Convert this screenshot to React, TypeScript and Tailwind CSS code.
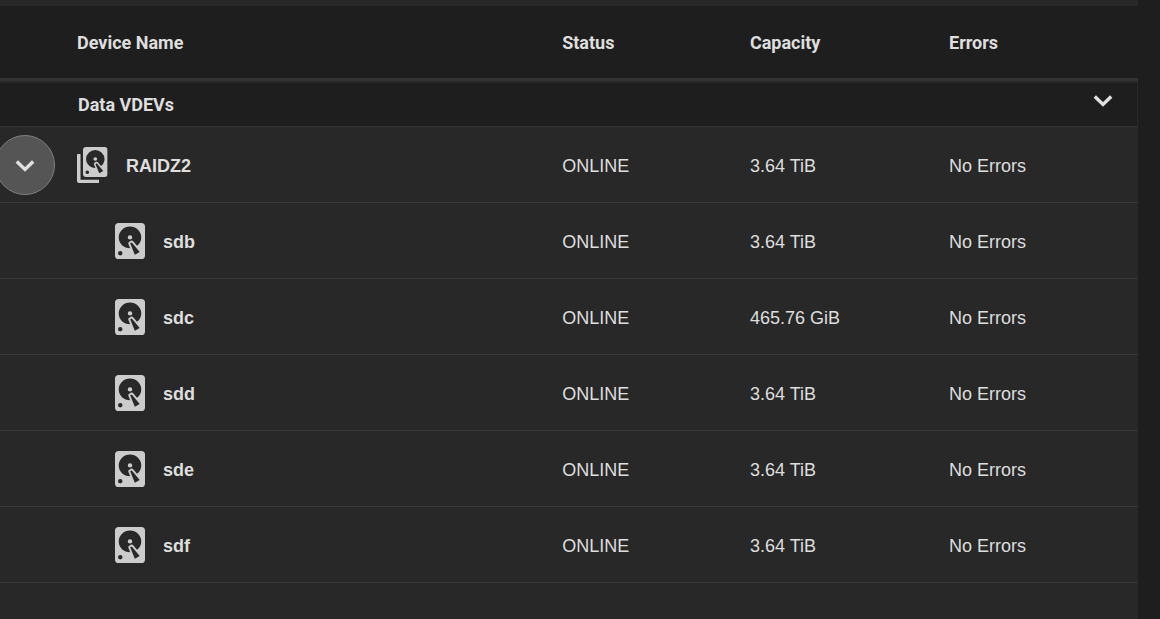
import React, { useState } from 'react';

interface Disk {
  name: string;
  status: string;
  capacity: string;
  errors: string;
}

const raid: Disk = { name: 'RAIDZ2', status: 'ONLINE', capacity: '3.64 TiB', errors: 'No Errors' };

const disks: Disk[] = [
  { name: 'sdb', status: 'ONLINE', capacity: '3.64 TiB', errors: 'No Errors' },
  { name: 'sdc', status: 'ONLINE', capacity: '465.76 GiB', errors: 'No Errors' },
  { name: 'sdd', status: 'ONLINE', capacity: '3.64 TiB', errors: 'No Errors' },
  { name: 'sde', status: 'ONLINE', capacity: '3.64 TiB', errors: 'No Errors' },
  { name: 'sdf', status: 'ONLINE', capacity: '3.64 TiB', errors: 'No Errors' },
];

const DISK_PATH =
  'M6,2H18A2,2 0 0,1 20,4V20A2,2 0 0,1 18,22H6A2,2 0 0,1 4,20V4A2,2 0 0,1 6,2M12,4A6,6 0 0,0 6,10C6,13.31 8.69,16 12.1,16L11.22,13.77C10.95,13.29 11.11,12.68 11.59,12.4L12.45,11.9C12.93,11.63 13.54,11.79 13.82,12.27L15.74,14.69C17.12,13.59 18,11.9 18,10A6,6 0 0,0 12,4M12,8.8A1.2,1.2 0 0,1 13.2,10A1.2,1.2 0 0,1 12,11.2A1.2,1.2 0 0,1 10.8,10A1.2,1.2 0 0,1 12,8.8M6.8,17.6A1.2,1.2 0 0,0 5.6,18.8A1.2,1.2 0 0,0 6.8,20A1.2,1.2 0 0,0 8,18.8A1.2,1.2 0 0,0 6.8,17.6M12.09,13.27L14.58,19.58L17.17,18.08L12.95,12.77L12.09,13.27Z';

const DiskIcon = () => (
  <svg viewBox="4 2 16 20" preserveAspectRatio="none" className="w-[30px] h-9 shrink-0 fill-[#cccccc]" aria-hidden="true">
    <path d={DISK_PATH} />
  </svg>
);

const DiskGroupIcon = () => (
  <svg viewBox="0 0 31 36" className="w-[31px] h-9 shrink-0 fill-[#cccccc]" aria-hidden="true">
    <path d="M1 7H3.5V32.7H22V36H2A2 2 0 0 1 0 34V8A1 1 0 0 1 1 7Z" />
    <svg x="6" y="0" width="24.6" height="30" viewBox="4 2 16 20" preserveAspectRatio="none">
      <path d={DISK_PATH} />
    </svg>
  </svg>
);

const Chevron = ({ open }: { open: boolean }) => (
  <svg
    viewBox="0 0 20 12"
    className={`w-5 h-3 fill-none stroke-[#e0e0e0] ${open ? '' : '-rotate-90'}`}
    strokeWidth="3.5"
    aria-hidden="true"
  >
    <path d="M1.8 1.6L10 9.4L18.2 1.6" />
  </svg>
);

const cell = 'border-b border-[#383838] p-0';

const DataCells = ({ disk }: { disk: Disk }) => (
  <>
    <td className={`${cell} pt-0.5`}>{disk.status}</td>
    <td className={`${cell} pt-0.5`}>{disk.capacity}</td>
    <td className={`${cell} pt-0.5`}>{disk.errors}</td>
  </>
);

export default function App() {
  const [groupOpen, setGroupOpen] = useState(true);
  const [raidOpen, setRaidOpen] = useState(true);

  return (
    <main className="min-h-screen bg-[#1e1e1e] pr-[22px] overflow-hidden font-['Liberation_Sans',sans-serif] text-lg text-[#dedede]">
      <div className="min-h-screen bg-[#282828] pt-1.5">
        <table className="w-full table-fixed border-separate border-spacing-0 text-left">
          <colgroup>
            <col className="w-[49.4%]" />
            <col className="w-[16.5%]" />
            <col className="w-[17.5%]" />
            <col />
          </colgroup>
          <thead className="font-[Roboto,sans-serif]">
            <tr className="h-[75px] bg-[#1e1e1e] [&>th]:border-b-3 [&>th]:border-[#343434] [&>th]:p-0 [&>th]:pt-0.5 [&>th]:font-bold">
              <th scope="col">
                <span className="pl-[77px]">Device Name</span>
              </th>
              <th scope="col">Status</th>
              <th scope="col">Capacity</th>
              <th scope="col">Errors</th>
            </tr>
          </thead>
          <tbody>
            <tr className="h-[46px] bg-[#1e1e1e]">
              <th
                scope="rowgroup"
                colSpan={4}
                className="border-t-2 border-r border-b border-t-[#282828] border-r-[#282828] border-b-[#343434] p-0 font-[Roboto,sans-serif] font-bold"
              >
                <div className="flex items-center justify-between pl-[78px] pr-6">
                  <span>Data VDEVs</span>
                  <button
                    type="button"
                    aria-label="Toggle Data VDEVs"
                    aria-expanded={groupOpen}
                    onClick={() => setGroupOpen(!groupOpen)}
                    className="pb-2"
                  >
                    <Chevron open={groupOpen} />
                  </button>
                </div>
              </th>
            </tr>
            {groupOpen && (
              <tr className="h-[76px]">
                <td className={cell}>
                  <div className="flex items-center">
                    <button
                      type="button"
                      aria-label="Toggle RAIDZ2"
                      aria-expanded={raidOpen}
                      onClick={() => setRaidOpen(!raidOpen)}
                      className="-ml-[5px] mr-[22px] flex size-15 shrink-0 items-center justify-center rounded-full border border-[#808080] bg-[#555555] pt-0.5"
                    >
                      <Chevron open={raidOpen} />
                    </button>
                    <DiskGroupIcon />
                    <span className="pt-0.5 pl-[18px] font-bold">{raid.name}</span>
                  </div>
                </td>
                <DataCells disk={raid} />
              </tr>
            )}
            {groupOpen &&
              raidOpen &&
              disks.map((disk) => (
                <tr key={disk.name} className="h-[76px]">
                  <td className={cell}>
                    <div className="flex items-center pl-[115px]">
                      <DiskIcon />
                      <span className="pt-0.5 pl-[18px] font-bold">{disk.name}</span>
                    </div>
                  </td>
                  <DataCells disk={disk} />
                </tr>
              ))}
          </tbody>
        </table>
      </div>
    </main>
  );
}
